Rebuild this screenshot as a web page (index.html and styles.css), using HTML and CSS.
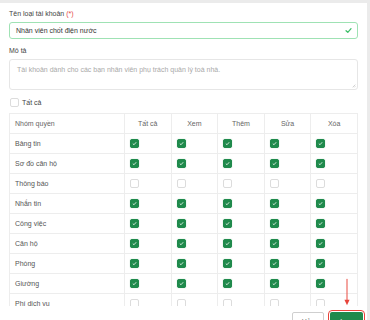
FILE: index.html
```html
<!DOCTYPE html>
<html lang="vi">
<head>
    <meta charset="UTF-8">
    <meta name="viewport" content="width=device-width, initial-scale=1.0">
    <title>Loại tài khoản</title>
    <link rel="stylesheet" href="styles.css">
</head>
<body>

<div class="modal">
    <div class="modal-body">
        <label class="field-label">Tên loại tài khoản <span class="required">(*)</span></label>
        <div class="input valid">
            <span>Nhân viên chốt điện nước</span>
            <svg class="valid-icon" viewBox="0 0 10 10"><path d="M1.5 5.3 L4 7.6 L8.6 2.4" fill="none" stroke="#3cbf68" stroke-width="1.8" stroke-linecap="round" stroke-linejoin="round"/></svg>
        </div>

        <label class="field-label gap">Mô tả</label>
        <div class="textarea">
            <span class="placeholder">Tài khoản dành cho các bạn nhân viên phụ trách quản lý toà nhà.</span>
            <svg class="resize" viewBox="0 0 6 6"><path d="M5 1 L1 5 M5 3.5 L3.5 5" stroke="#aaa" stroke-width="0.8"/></svg>
        </div>

        <div class="check-all">
            <span class="box"></span>
            <span>Tất cả</span>
        </div>

        <table class="perm-table">
            <colgroup>
                <col class="col-name">
                <col><col><col><col><col>
            </colgroup>
            <tr>
                <th class="name">Nhóm quyền</th>
                <th>Tất cả</th>
                <th>Xem</th>
                <th>Thêm</th>
                <th>Sửa</th>
                <th>Xóa</th>
            </tr>
            <tr><td class="name">Bảng tin</td><td><span class="box on"></span></td><td><span class="box on"></span></td><td><span class="box on"></span></td><td><span class="box on"></span></td><td><span class="box on"></span></td></tr>
            <tr><td class="name">Sơ đồ căn hộ</td><td><span class="box on"></span></td><td><span class="box on"></span></td><td><span class="box on"></span></td><td><span class="box on"></span></td><td><span class="box on"></span></td></tr>
            <tr><td class="name">Thông báo</td><td><span class="box"></span></td><td><span class="box"></span></td><td><span class="box"></span></td><td><span class="box"></span></td><td><span class="box"></span></td></tr>
            <tr><td class="name">Nhắn tin</td><td><span class="box on"></span></td><td><span class="box on"></span></td><td><span class="box on"></span></td><td><span class="box on"></span></td><td><span class="box on"></span></td></tr>
            <tr><td class="name">Công việc</td><td><span class="box on"></span></td><td><span class="box on"></span></td><td><span class="box on"></span></td><td><span class="box on"></span></td><td><span class="box on"></span></td></tr>
            <tr><td class="name">Căn hộ</td><td><span class="box on"></span></td><td><span class="box on"></span></td><td><span class="box on"></span></td><td><span class="box on"></span></td><td><span class="box on"></span></td></tr>
            <tr><td class="name">Phòng</td><td><span class="box on"></span></td><td><span class="box on"></span></td><td><span class="box on"></span></td><td><span class="box on"></span></td><td><span class="box on"></span></td></tr>
            <tr><td class="name">Giường</td><td><span class="box on"></span></td><td><span class="box on"></span></td><td><span class="box on"></span></td><td><span class="box on"></span></td><td><span class="box on"></span></td></tr>
            <tr><td class="name">Phí dịch vụ</td><td><span class="box"></span></td><td><span class="box"></span></td><td><span class="box"></span></td><td><span class="box"></span></td><td><span class="box"></span></td></tr>
            <tr><td class="name">Hóa đơn</td><td><span class="box"></span></td><td><span class="box"></span></td><td><span class="box"></span></td><td><span class="box"></span></td><td><span class="box"></span></td></tr>
        </table>
    </div>

    <div class="modal-footer">
        <button class="btn btn-cancel">Hủy</button>
        <button class="btn btn-save">Lưu</button>
        <svg class="arrow" viewBox="0 0 10 34"><path d="M5 0 V28" stroke="#e8433a" stroke-width="1.2"/><path d="M1.8 26 L5 33 L8.2 26 Z" fill="#e8433a"/></svg>
    </div>
</div>

</body>
</html>
```

FILE: styles.css
```css
body {
    margin: 0;
    background-color: #ebebeb;
    font-family: 'Liberation Sans', Arial, sans-serif;
    font-size: 7px;
    color: #444;
    overflow: hidden;
}
.modal {
    position: relative;
    margin: 3px 3px 0 0;
    height: 317px;
    background: white;
    display: flex;
    flex-direction: column;
    overflow: hidden;
}
.modal-body {
    flex-shrink: 0;
    height: 303px;
    overflow: hidden;
    padding: 6px 9px 0 9px;
    box-sizing: border-box;
}
.field-label {
    display: block;
    line-height: 10px;
    color: #444;
}
.field-label.gap {
    margin-top: 7px;
}
.required {
    color: #e5483f;
}
.input {
    margin-top: 3px;
    height: 17px;
    border: 1px solid #9fe2b4;
    border-radius: 3px;
    box-sizing: border-box;
    display: flex;
    align-items: center;
    justify-content: space-between;
    padding: 0 5px 0 6px;
    color: #333;
}
.valid-icon {
    width: 7px;
    height: 7px;
}
.textarea {
    position: relative;
    margin-top: 3px;
    height: 31px;
    border: 1px solid #e6e6e6;
    border-radius: 3px;
    box-sizing: border-box;
    padding: 5px 7px;
    line-height: 10px;
}
.placeholder {
    color: #a9a9a9;
}
.resize {
    position: absolute;
    right: 1px;
    bottom: 1px;
    width: 4px;
    height: 4px;
}
.check-all {
    margin-top: 7px;
    display: flex;
    align-items: center;
    gap: 3px;
    height: 10px;
    padding-left: 1px;
    color: #444;
}
.box {
    display: inline-block;
    width: 9px;
    height: 9px;
    border: 1px solid #dcdcdc;
    border-radius: 2px;
    box-sizing: border-box;
    background: white;
    vertical-align: middle;
}
.box.on {
    border-color: #1f8a4c;
    background-color: #1f8a4c;
    background-image: url("data:image/svg+xml,%3Csvg xmlns='http://www.w3.org/2000/svg' viewBox='0 0 10 10'%3E%3Cpath d='M2.6 5.2 L4.3 6.8 L7.4 3.2' fill='none' stroke='%23e8f5ec' stroke-width='1.2'/%3E%3C/svg%3E");
    background-size: 100% 100%;
    box-shadow: 0 0 1px rgba(31, 138, 76, 0.5);
}
.perm-table {
    margin-top: 6px;
    width: 349px;
    table-layout: fixed;
    border-collapse: collapse;
}
.col-name {
    width: 115px;
}
.perm-table th, .perm-table td {
    height: 20px;
    padding: 0 0 0 5px;
    border: 1px solid #ededed;
    box-sizing: border-box;
    text-align: left;
    font-weight: normal;
    color: #555;
}
.perm-table th {
    text-align: center;
    padding: 0;
    color: #666;
}
.perm-table th.name {
    text-align: left;
    padding-left: 5px;
}
.perm-table td .box {
    margin-top: -1px;
}
.modal-footer {
    flex: 1;
    display: flex;
    justify-content: flex-end;
    align-items: flex-start;
    gap: 6px;
    padding: 6px 4px 0 0;
}
.btn {
    flex-shrink: 0;
    height: 18px;
    font-family: 'Liberation Sans', Arial, sans-serif;
    font-size: 7px;
    border-radius: 2px;
    padding: 0;
    cursor: pointer;
}
.btn-cancel {
    width: 32px;
    background: white;
    border: 1px solid #cfcfcf;
    color: #666;
}
.btn-save {
    width: 33px;
    background: #1f8a4c;
    border: none;
    color: white;
    outline: 1px solid #e8433a;
    outline-offset: 1px;
}
.arrow {
    position: absolute;
    right: 16px;
    bottom: 11px;
    width: 8px;
    height: 33px;
}
```
